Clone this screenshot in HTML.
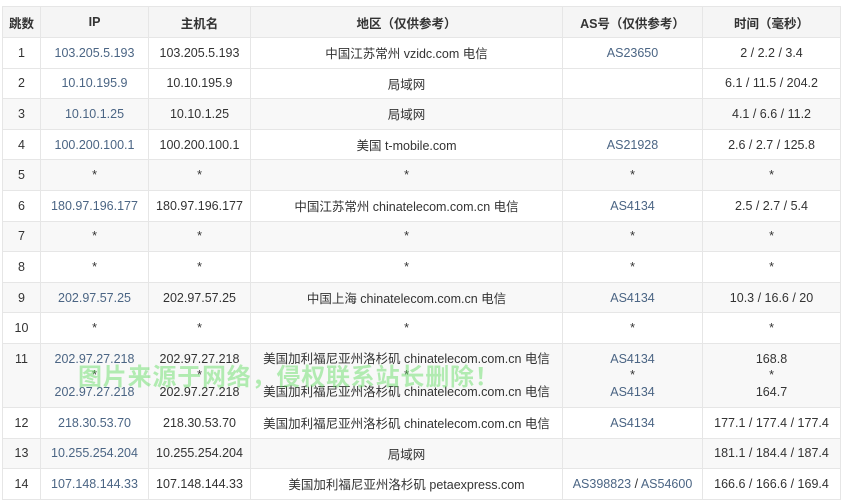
<!DOCTYPE html>
<html><head><meta charset="utf-8"><style>
body{margin:0;background:#fff;width:842px;height:500px;overflow:hidden;position:relative;font-family:"Liberation Sans","Noto Sans CJK SC",sans-serif;}
table{position:absolute;left:2px;top:6px;border-collapse:collapse;table-layout:fixed;width:838px;font-size:12.5px;color:#333;}
td,th{border:1px solid #e6e6e6;text-align:center;height:29.6px;padding:0;white-space:nowrap;overflow:hidden;}
th{background:#f5f5f5;font-weight:bold;height:30px;}
tr.g td{background:#f8f8f8;}
.b{color:#4b6584;}
.l{line-height:16.5px;}
.wm{position:absolute;left:78px;top:357px;font-size:24px;font-weight:bold;letter-spacing:0.8px;color:rgba(90,220,90,0.45);font-family:"Noto Sans CJK SC",sans-serif;white-space:nowrap;}
</style></head><body>
<table>
<colgroup><col style="width:38px"><col style="width:108px"><col style="width:102px"><col style="width:312px"><col style="width:140px"><col style="width:138px"></colgroup>
<tr><th>跳数</th><th>IP</th><th>主机名</th><th>地区（仅供参考）</th><th>AS号（仅供参考）</th><th>时间（毫秒）</th></tr>
<tr><td>1</td><td class="b">103.205.5.193</td><td>103.205.5.193</td><td>中国江苏常州 vzidc.com 电信</td><td class="b">AS23650</td><td>2 / 2.2 / 3.4</td></tr>
<tr><td>2</td><td class="b">10.10.195.9</td><td>10.10.195.9</td><td>局域网</td><td></td><td>6.1 / 11.5 / 204.2</td></tr>
<tr class="g"><td>3</td><td class="b">10.10.1.25</td><td>10.10.1.25</td><td>局域网</td><td></td><td>4.1 / 6.6 / 11.2</td></tr>
<tr><td>4</td><td class="b">100.200.100.1</td><td>100.200.100.1</td><td>美国 t-mobile.com</td><td class="b">AS21928</td><td>2.6 / 2.7 / 125.8</td></tr>
<tr class="g"><td>5</td><td>*</td><td>*</td><td>*</td><td>*</td><td>*</td></tr>
<tr><td>6</td><td class="b">180.97.196.177</td><td>180.97.196.177</td><td>中国江苏常州 chinatelecom.com.cn 电信</td><td class="b">AS4134</td><td>2.5 / 2.7 / 5.4</td></tr>
<tr class="g"><td>7</td><td>*</td><td>*</td><td>*</td><td>*</td><td>*</td></tr>
<tr><td>8</td><td>*</td><td>*</td><td>*</td><td>*</td><td>*</td></tr>
<tr class="g"><td>9</td><td class="b">202.97.57.25</td><td>202.97.57.25</td><td>中国上海 chinatelecom.com.cn 电信</td><td class="b">AS4134</td><td>10.3 / 16.6 / 20</td></tr>
<tr><td>10</td><td>*</td><td>*</td><td>*</td><td>*</td><td>*</td></tr>
<tr class="g" style="height:63px"><td style="height:63px;vertical-align:top;"><div style="margin-top:8px">11</div></td>
<td class="b l">202.97.27.218<br><span style="color:#333">*</span><br>202.97.27.218</td>
<td class="l">202.97.27.218<br>*<br>202.97.27.218</td>
<td class="l">美国加利福尼亚州洛杉矶 chinatelecom.com.cn 电信<br>*<br>美国加利福尼亚州洛杉矶 chinatelecom.com.cn 电信</td>
<td class="l"><span class="b">AS4134</span><br>*<br><span class="b">AS4134</span></td>
<td class="l">168.8<br>*<br>164.7</td></tr>
<tr><td>12</td><td class="b">218.30.53.70</td><td>218.30.53.70</td><td>美国加利福尼亚州洛杉矶 chinatelecom.com.cn 电信</td><td class="b">AS4134</td><td>177.1 / 177.4 / 177.4</td></tr>
<tr class="g"><td>13</td><td class="b">10.255.254.204</td><td>10.255.254.204</td><td>局域网</td><td></td><td>181.1 / 184.4 / 187.4</td></tr>
<tr><td>14</td><td class="b">107.148.144.33</td><td>107.148.144.33</td><td>美国加利福尼亚州洛杉矶 petaexpress.com</td><td><span class="b">AS398823</span> / <span class="b">AS54600</span></td><td>166.6 / 166.6 / 169.4</td></tr>
</table>
<div class="wm">图片来源于网络，侵权联系站长删除！</div>
</body></html>
